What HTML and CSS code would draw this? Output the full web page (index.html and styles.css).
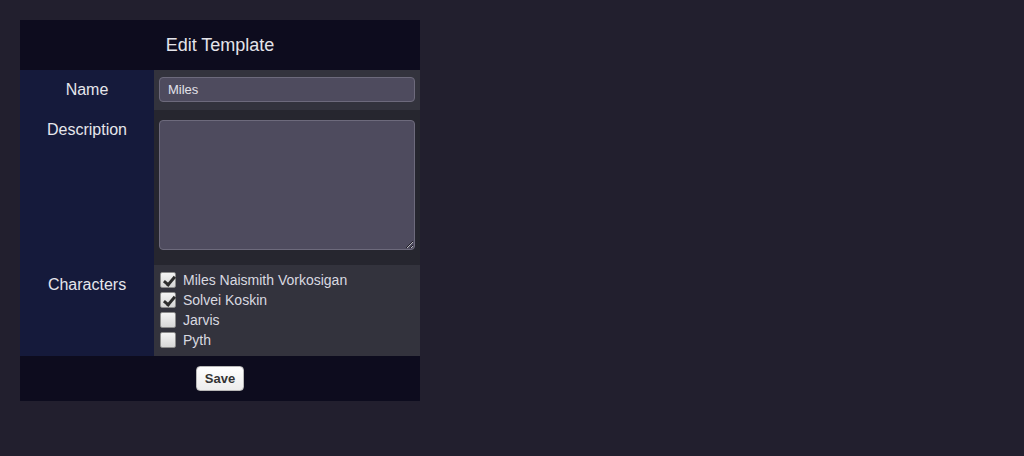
FILE: index.html
```html
<!DOCTYPE html>
<html>
<head>
<meta charset="utf-8">
<link rel="stylesheet" href="styles.css">
</head>
<body>
<form class="panel">
  <div class="panel-title">Edit Template</div>
  <div class="row row-light">
    <div class="label">Name</div>
    <div class="field field-name"><input class="text-input" type="text" value="Miles"></div>
  </div>
  <div class="row row-dark">
    <div class="label">Description</div>
    <div class="field field-desc"><textarea class="text-area"></textarea></div>
  </div>
  <div class="row row-light">
    <div class="label">Characters</div>
    <div class="field field-chars">
      <label class="char"><span class="box checked"></span>Miles Naismith Vorkosigan</label>
      <label class="char"><span class="box checked"></span>Solvei Koskin</label>
      <label class="char"><span class="box"></span>Jarvis</label>
      <label class="char"><span class="box"></span>Pyth</label>
    </div>
  </div>
  <div class="panel-footer"><button class="save" type="button">Save</button></div>
</form>
</body>
</html>
```
FILE: styles.css
```css
html, body {
  margin: 0;
  padding: 0;
  background: #221f2e;
  font-family: "Liberation Sans", Arial, sans-serif;
}
body {
  padding: 20px;
}
.panel {
  width: 400px;
  margin: 0;
  display: flex;
  flex-direction: column;
}
.panel-title {
  height: 50px;
  background: #0d0c1e;
  color: #e4e4ea;
  font-size: 18px;
  display: flex;
  align-items: center;
  justify-content: center;
}
.row {
  display: flex;
}
.row-light .field { background: #33333d; }
.row-dark .field { background: #26262f; }
.label {
  width: 134px;
  flex: none;
  background: #151a3b;
  color: #e6e6ec;
  font-size: 16px;
  line-height: 18px;
  text-align: center;
  padding-top: 11px;
  box-sizing: border-box;
}
.field {
  flex: 1;
  padding: 0 5px;
}
.field-name {
  padding-top: 7px;
  padding-bottom: 8px;
}
.field-desc {
  padding-top: 10px;
  padding-bottom: 15px;
}
.field-chars {
  padding-top: 5px;
  padding-bottom: 6px;
  padding-left: 6px;
  display: flex;
  flex-direction: column;
}
.text-input {
  display: block;
  width: 256px;
  height: 25px;
  box-sizing: border-box;
  margin: 0;
  background: #4e4b5e;
  border: 1px solid #6d6a7c;
  border-radius: 4px;
  color: #e2e2ea;
  font-family: "Liberation Sans", Arial, sans-serif;
  font-size: 13px;
  padding: 0 8px;
  outline: none;
}
.text-area {
  display: block;
  width: 256px;
  height: 130px;
  box-sizing: border-box;
  margin: 0;
  background: #4e4b5e;
  border: 1px solid #6d6a7c;
  border-radius: 4px;
  color: #e2e2ea;
  font-family: "Liberation Sans", Arial, sans-serif;
  font-size: 13px;
  outline: none;
}
.char {
  height: 20px;
  display: flex;
  align-items: center;
  color: #d9d9e0;
  font-size: 14px;
}
.box {
  width: 16px;
  height: 16px;
  box-sizing: border-box;
  border: 1px solid #8c8c8c;
  border-radius: 2px;
  background: linear-gradient(#f4f4f4, #d6d6d6);
  margin-right: 7px;
  position: relative;
  flex: none;
}
.box.checked::after {
  content: "";
  position: absolute;
  left: 5px;
  top: 1px;
  width: 4px;
  height: 9px;
  border: solid #2c2c2c;
  border-width: 0 3px 3px 0;
  transform: rotate(40deg);
}
.panel-footer {
  background: #0d0c1e;
  padding: 10px 0;
  display: flex;
  justify-content: center;
}
.save {
  height: 25px;
  width: 48px;
  padding: 0;
  border: 1px solid #b8b8b8;
  border-radius: 4px;
  background: linear-gradient(#ffffff, #ececec);
  color: #333;
  font-family: "Liberation Sans", Arial, sans-serif;
  font-size: 13px;
  font-weight: bold;
}
```
